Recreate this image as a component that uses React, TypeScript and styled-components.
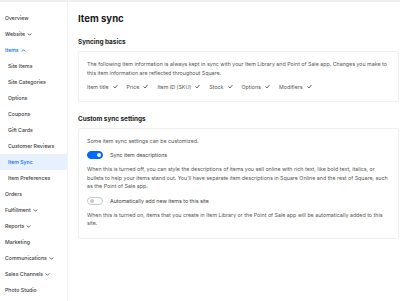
import styled, { createGlobalStyle } from 'styled-components'

const GlobalStyle = createGlobalStyle`
  html, body {
    margin: 0;
    padding: 0;
    background: #ffffff;
    font-family: Inter, "Noto Sans", "Liberation Sans", sans-serif;
    -webkit-font-smoothing: antialiased;
  }
`

const blue = '#006aff'

const Page = styled.div`
  display: flex;
  width: 400px;
  height: 301px;
  overflow: hidden;
  border-top: 2px solid #efefef;
  box-sizing: border-box;
`

const Sidebar = styled.nav`
  width: 67px;
  flex-shrink: 0;
  display: flex;
  flex-direction: column;
  padding-top: 8px;
  border-right: 1px solid #f3f3f3;
`

const NavItem = styled.div<{ $sub?: boolean; $active?: boolean; $open?: boolean }>`
  display: flex;
  align-items: center;
  gap: 2px;
  height: 16px;
  padding-left: ${(p) => (p.$sub ? '8px' : '5px')};
  font-size: 5.2px;
  font-weight: 500;
  white-space: nowrap;
  color: ${(p) => (p.$active || p.$open ? blue : '#3d3d3d')};
  background: ${(p) => (p.$active ? '#e6f0ff' : 'transparent')};
`

const Chevron = ({ up, color }: { up?: boolean; color: string }) => (
  <svg width="5" height="5" viewBox="0 0 10 10">
    <path
      d={up ? 'M2 6.5 L5 3.5 L8 6.5' : 'M2 3.5 L5 6.5 L8 3.5'}
      fill="none"
      stroke={color}
      strokeWidth="1.6"
      strokeLinecap="round"
      strokeLinejoin="round"
    />
  </svg>
)

const Main = styled.main`
  flex: 1;
  padding: 10px 1px 0 10px;
  display: flex;
  flex-direction: column;
`

const Title = styled.h1`
  margin: 0 0 11px;
  font-size: 9.6px;
  font-weight: 700;
  color: #1a1a1a;
  line-height: 14px;
`

const SectionTitle = styled.h2`
  margin: 0 0 4px;
  font-size: 6.4px;
  font-weight: 700;
  color: #1a1a1a;
  line-height: 10px;
`

const Card = styled.section`
  border: 1px solid #f0f0f0;
  border-radius: 2px;
  padding: 8px 9.5px 10px 8px;
  margin-bottom: 12px;
  display: flex;
  flex-direction: column;
`

const Text = styled.p`
  margin: 0;
  font-size: 5.3px;
  line-height: 8.5px;
  color: #555;
`

const Chips = styled.div`
  display: flex;
  gap: 9px;
  margin-top: 5.5px;
`

const Chip = styled.span`
  display: flex;
  align-items: center;
  gap: 4px;
  font-size: 5.3px;
  line-height: 8px;
  color: #555;
`

const Check = () => (
  <svg width="5" height="5" viewBox="0 0 10 10">
    <path d="M1.5 5.5 L4 8 L8.5 2.5" fill="none" stroke="#333" strokeWidth="1.5" strokeLinecap="round" strokeLinejoin="round" />
  </svg>
)

const ToggleRow = styled.div`
  display: flex;
  align-items: center;
  gap: 7px;
  height: 12px;
  margin: 4px 0;
`

const Toggle = styled.span<{ $on?: boolean }>`
  position: relative;
  width: 16px;
  height: 8px;
  border-radius: 5px;
  box-sizing: border-box;
  background: ${(p) => (p.$on ? blue : '#fff')};
  border: 1px solid ${(p) => (p.$on ? blue : '#c8c8c8')};

  &::after {
    content: '';
    position: absolute;
    top: 1px;
    left: ${(p) => (p.$on ? '9px' : '2px')};
    width: 4px;
    height: 4px;
    border-radius: 50%;
    background: ${(p) => (p.$on ? '#fff' : '#c8c8c8')};
  }
`

const ToggleLabel = styled.span`
  font-size: 5.3px;
  color: #3d3d3d;
`

const navItems: { label: string; sub?: boolean; chevron?: 'down' | 'up'; active?: boolean; open?: boolean }[] = [
  { label: 'Overview' },
  { label: 'Website', chevron: 'down' },
  { label: 'Items', chevron: 'up', open: true },
  { label: 'Site Items', sub: true },
  { label: 'Site Categories', sub: true },
  { label: 'Options', sub: true },
  { label: 'Coupons', sub: true },
  { label: 'Gift Cards', sub: true },
  { label: 'Customer Reviews', sub: true },
  { label: 'Item Sync', sub: true, active: true },
  { label: 'Item Preferences', sub: true },
  { label: 'Orders' },
  { label: 'Fulfillment', chevron: 'down' },
  { label: 'Reports', chevron: 'down' },
  { label: 'Marketing' },
  { label: 'Communications', chevron: 'down' },
  { label: 'Sales Channels', chevron: 'down' },
  { label: 'Photo Studio' },
]

const syncedFields = ['Item title', 'Price', 'Item ID (SKU)', 'Stock', 'Options', 'Modifiers']

export default function App() {
  return (
    <>
      <GlobalStyle />
      <Page>
        <Sidebar>
          {navItems.map((item) => (
            <NavItem key={item.label} $sub={item.sub} $active={item.active} $open={item.open}>
              {item.label}
              {item.chevron && <Chevron up={item.chevron === 'up'} color={item.open ? blue : '#3d3d3d'} />}
            </NavItem>
          ))}
        </Sidebar>
        <Main>
          <Title>Item sync</Title>
          <SectionTitle>Syncing basics</SectionTitle>
          <Card>
            <Text>
              The following item information is always kept in sync with your Item Library and Point of Sale app. Changes you make to
              this item information are reflected throughout Square.
            </Text>
            <Chips>
              {syncedFields.map((f) => (
                <Chip key={f}>
                  {f}
                  <Check />
                </Chip>
              ))}
            </Chips>
          </Card>
          <SectionTitle>Custom sync settings</SectionTitle>
          <Card>
            <Text>Some item sync settings can be customized.</Text>
            <ToggleRow>
              <Toggle $on />
              <ToggleLabel>Sync item descriptions</ToggleLabel>
            </ToggleRow>
            <Text>
              When this is turned off, you can style the descriptions of items you sell online with rich text, like bold text, italics, or
              bullets to help your items stand out. You'll have separate item descriptions in Square Online and the rest of Square, such
              as the Point of Sale app.
            </Text>
            <ToggleRow>
              <Toggle />
              <ToggleLabel>Automatically add new items to this site</ToggleLabel>
            </ToggleRow>
            <Text>
              When this is turned on, items that you create in Item Library or the Point of Sale app will be automatically added to this
              site.
            </Text>
          </Card>
        </Main>
      </Page>
    </>
  )
}
